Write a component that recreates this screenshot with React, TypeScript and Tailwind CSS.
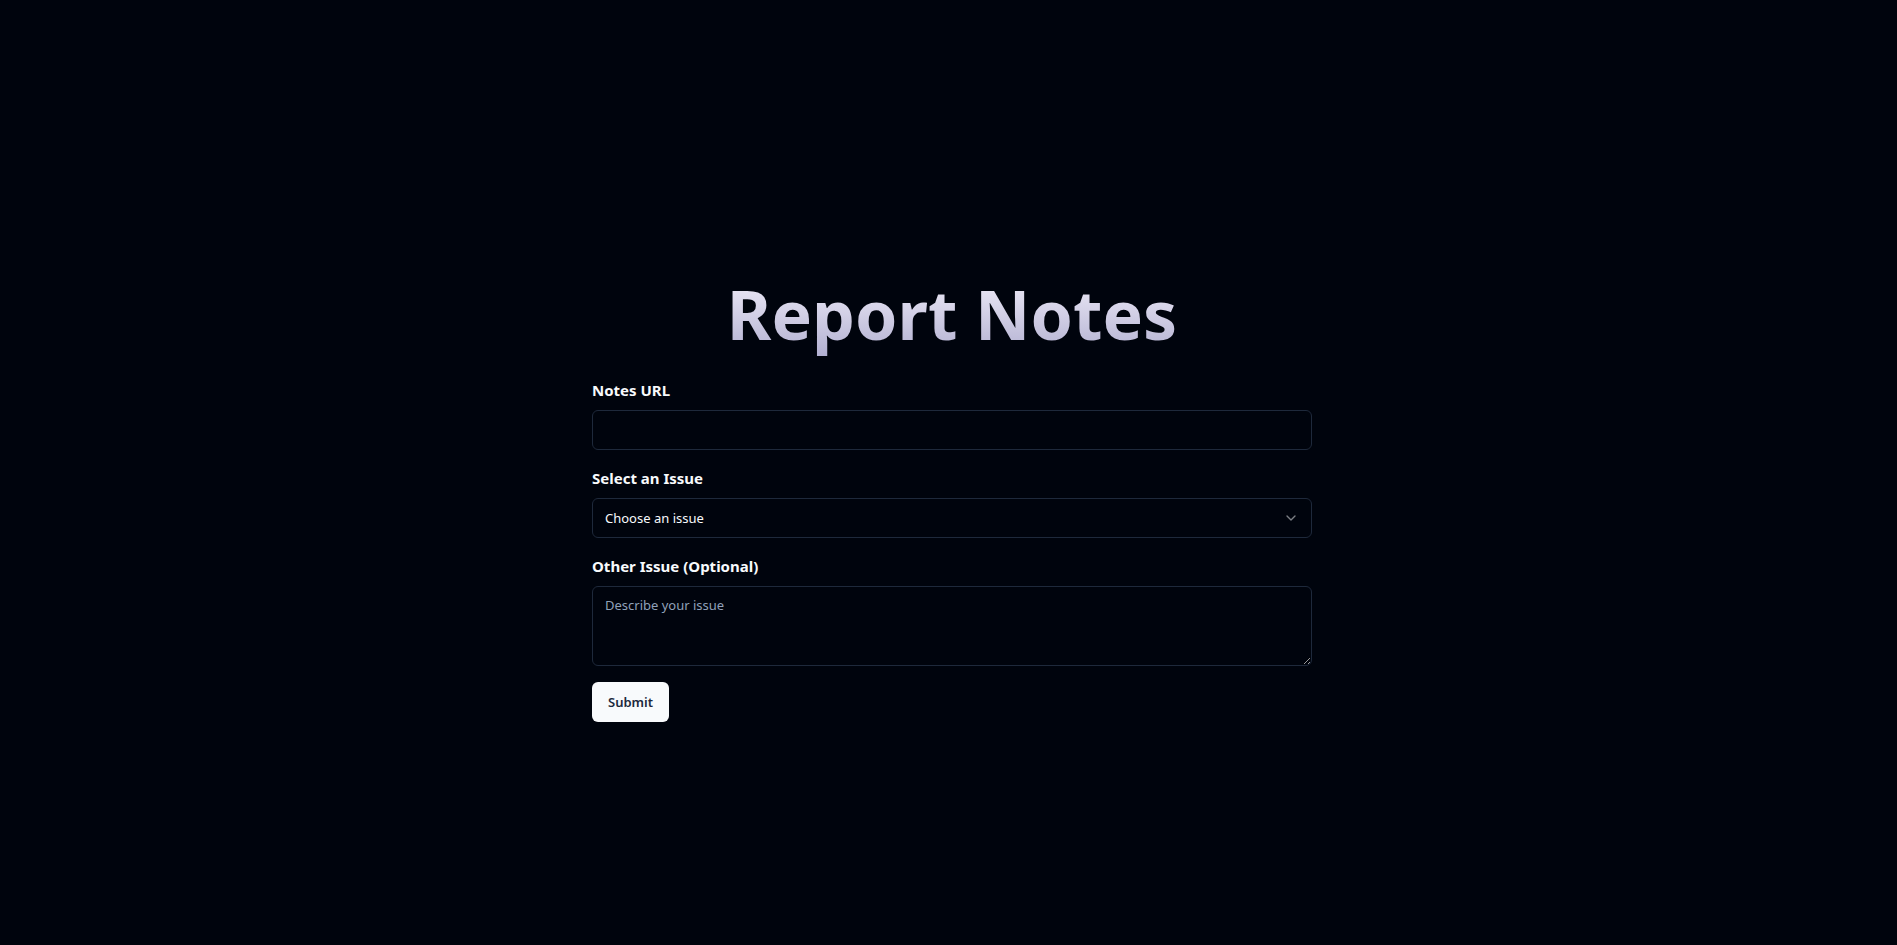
import { ChevronDown } from "lucide-react";

const fieldClass =
  "block w-full rounded-md border border-[#1e293b] bg-[#00040d] px-3 py-2 text-[13px] leading-5 text-slate-50 outline-none focus:ring-2 focus:ring-slate-300";
const labelClass = "mb-2 block text-[15px] leading-6 font-bold text-slate-50";

export default function App() {
  return (
    <main className="flex min-h-screen flex-col items-center justify-center bg-[#00040d] pl-[7px] font-['Noto_Sans','Open_Sans',sans-serif]">
      <div className="w-full max-w-[720px]">
        <h1 className="mb-4 bg-gradient-to-b from-[#e8e5f3] from-45% to-[#b3b1d2] to-95% bg-clip-text pt-[54px] pb-3 text-center text-[68px] leading-[72px] font-bold text-transparent">
          Report Notes
        </h1>
        <form className="space-y-4" onSubmit={(e) => e.preventDefault()}>
          <div>
            <label htmlFor="notes-url" className={labelClass}>
              Notes URL
            </label>
            <input id="notes-url" type="text" className={`${fieldClass} h-10`} />
          </div>
          <div>
            <label htmlFor="issue" className={labelClass}>
              Select an Issue
            </label>
            <div className="relative">
              <select id="issue" defaultValue="" className={`${fieldClass} h-10 appearance-none`}>
                <option value="">Choose an issue</option>
                <option value="other">Other</option>
              </select>
              <ChevronDown className="pointer-events-none absolute top-3 right-[13px] h-4 w-4 text-slate-50 opacity-50" />
            </div>
          </div>
          <div>
            <label htmlFor="details" className={labelClass}>
              Other Issue (Optional)
            </label>
            <textarea
              id="details"
              placeholder="Describe your issue"
              className={`${fieldClass} h-20 placeholder:text-slate-400`}
            />
          </div>
          <button
            type="submit"
            className="block h-10 rounded-md bg-slate-50 px-4 text-[13px] leading-5 font-semibold text-slate-800"
          >
            Submit
          </button>
        </form>
      </div>
    </main>
  );
}
